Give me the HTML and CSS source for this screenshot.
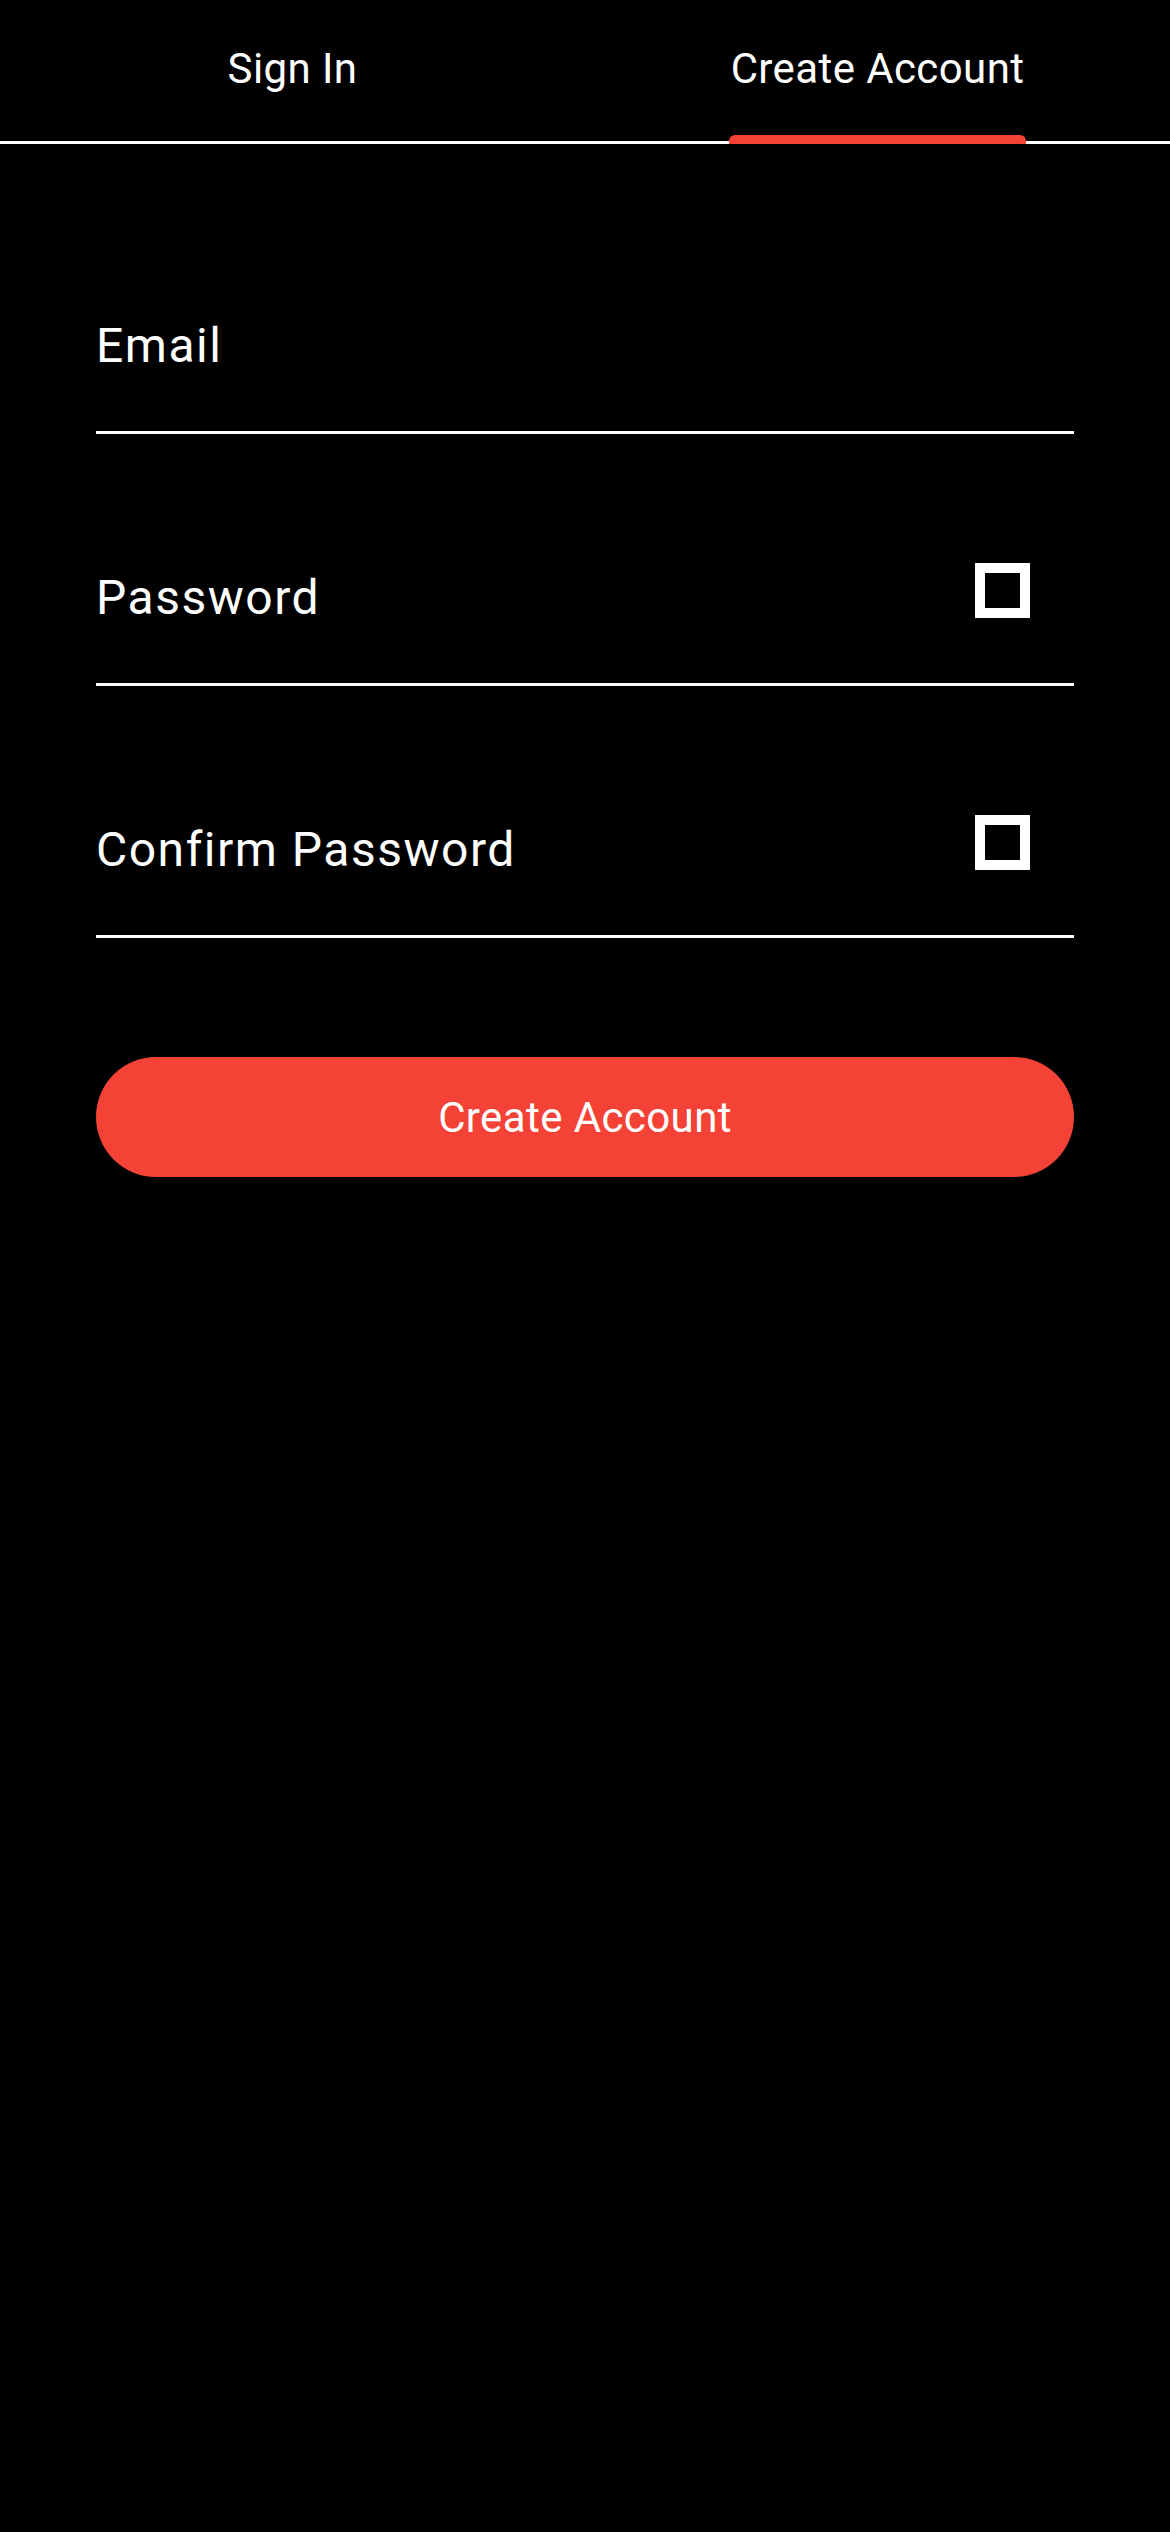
FILE: index.html
```html
<!DOCTYPE html>
<html lang="en">
<head>
<meta charset="utf-8">
<title>Create Account</title>
<link rel="stylesheet" href="styles.css">
</head>
<body>
<div class="screen">
  <nav class="tabs">
    <div class="tab">
      <div class="tab-inner">
        <span class="tab-text">Sign In</span>
      </div>
    </div>
    <div class="tab tab-active">
      <div class="tab-inner">
        <span class="tab-text">Create Account</span>
        <span class="tab-indicator"></span>
      </div>
    </div>
  </nav>

  <form class="form">
    <div class="field">
      <div class="field-row">
        <span class="field-label">Email</span>
      </div>
    </div>
    <div class="field">
      <div class="field-row">
        <span class="field-label">Password</span>
        <span class="checkbox"></span>
      </div>
    </div>
    <div class="field">
      <div class="field-row">
        <span class="field-label">Confirm Password</span>
        <span class="checkbox"></span>
      </div>
    </div>
    <button type="button" class="primary-btn">Create Account</button>
  </form>
</div>
</body>
</html>
```

FILE: styles.css
```css
* {
  box-sizing: border-box;
}

html, body {
  margin: 0;
  padding: 0;
  background: #000;
}

body {
  font-family: Roboto, "Noto Sans", "Liberation Sans", sans-serif;
  color: #fff;
}

.screen {
  width: 1170px;
  min-height: 2532px;
  background: #000;
}

/* Tabs */
.tabs {
  display: flex;
  height: 144px;
  box-shadow: inset 0 -3px 0 #fff;
}

.tab {
  flex: 1;
  display: flex;
  justify-content: center;
}

.tab-inner {
  display: flex;
  flex-direction: column;
  align-items: stretch;
  padding-top: 44px;
}

.tab-text {
  font-size: 42px;
  line-height: 50px;
  letter-spacing: 0.4px;
  color: #fff;
  white-space: nowrap;
}

.tab-indicator {
  margin-top: auto;
  height: 9px;
  margin-left: -2px;
  margin-right: -2px;
  background: #f44336;
  border-radius: 6px 6px 0 0;
}

/* Form */
.form {
  padding: 38px 96px 0;
  display: flex;
  flex-direction: column;
}

.field {
  height: 252px;
  padding-top: 129px;
  border-bottom: 3px solid #fff;
}

.field-row {
  display: flex;
  align-items: flex-start;
  justify-content: space-between;
}

.field-label {
  margin-top: 7px;
  font-size: 48px;
  line-height: 56px;
  letter-spacing: 1.5px;
  color: #fff;
}

.checkbox {
  width: 55px;
  height: 55px;
  border: 10px solid #fff;
  margin-right: 44px;
  margin-top: 0;
}

.primary-btn {
  margin-top: 119px;
  height: 120px;
  width: 100%;
  border: none;
  border-radius: 60px;
  background: #f44336;
  color: #fff;
  font-family: Roboto, "Noto Sans", "Liberation Sans", sans-serif;
  font-size: 42px;
  letter-spacing: 0.4px;
  padding: 0;
}
```
